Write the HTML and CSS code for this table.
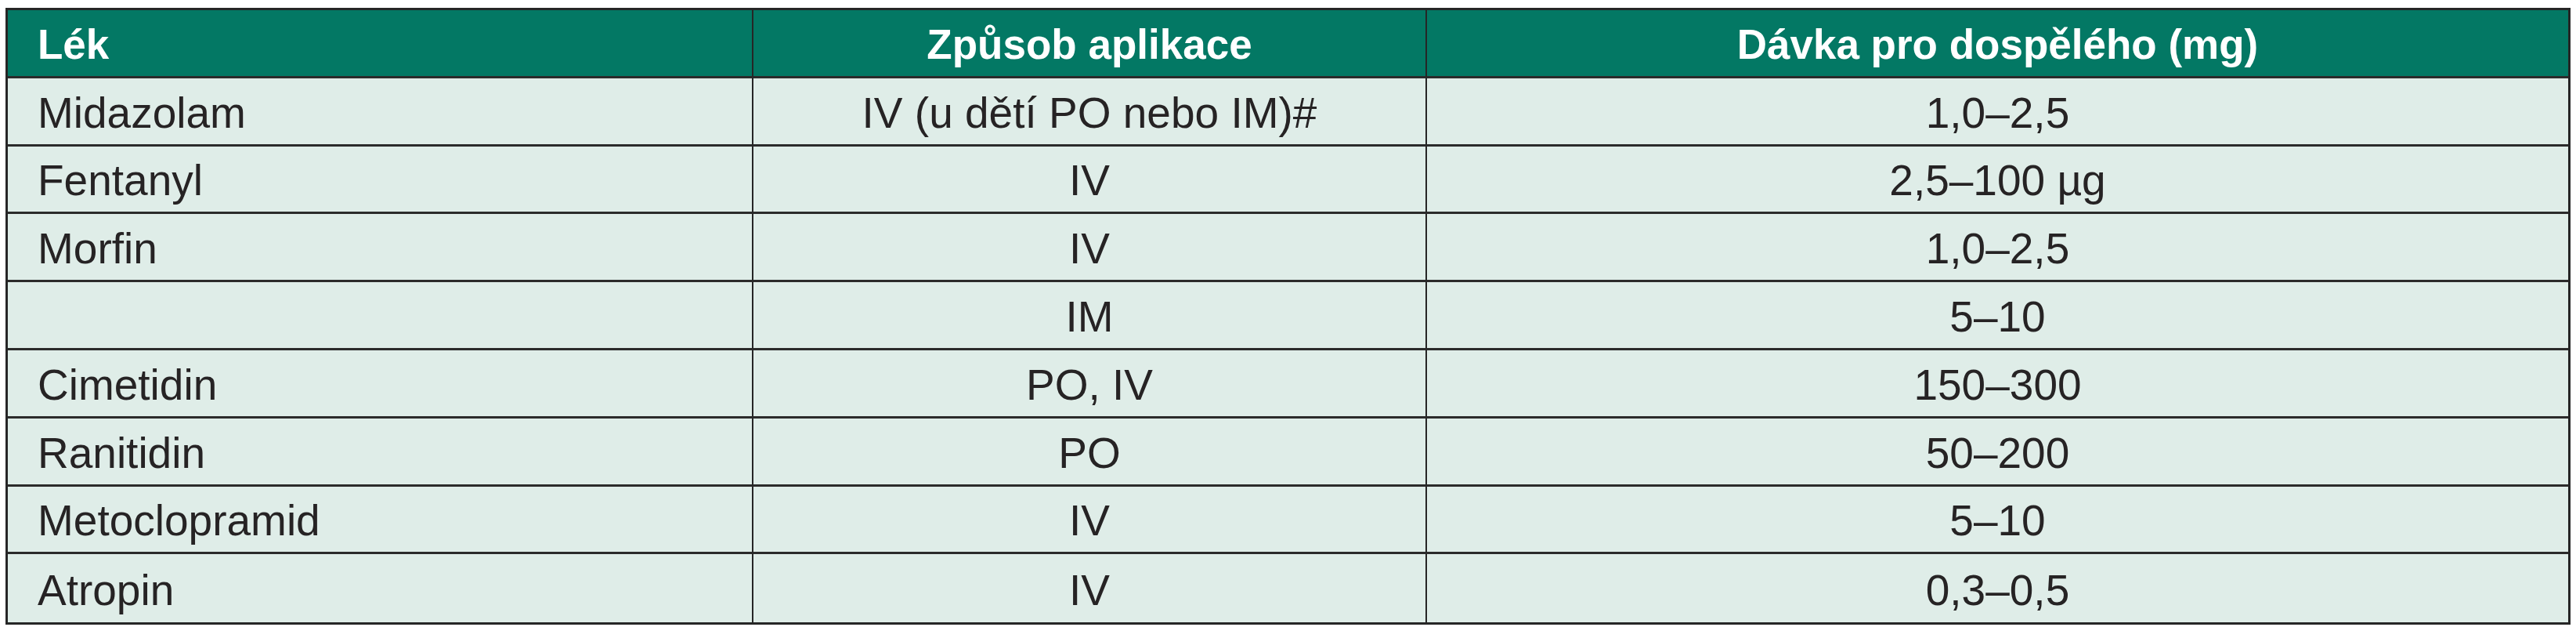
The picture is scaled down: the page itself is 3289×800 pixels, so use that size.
FILE: index.html
```html
<!DOCTYPE html>
<html lang="cs">
<head>
<meta charset="utf-8">
<title>Léky</title>
<link rel="stylesheet" href="styles.css">
</head>
<body>
<div class="tbl">
  <div class="cell head left">Lék</div>
  <div class="cell head">Způsob aplikace</div>
  <div class="cell head">Dávka pro dospělého (mg)</div>

  <div class="cell left">Midazolam</div>
  <div class="cell">IV (u dětí PO nebo IM)#</div>
  <div class="cell">1,0–2,5</div>

  <div class="cell left">Fentanyl</div>
  <div class="cell">IV</div>
  <div class="cell">2,5–100 µg</div>

  <div class="cell left">Morfin</div>
  <div class="cell">IV</div>
  <div class="cell">1,0–2,5</div>

  <div class="cell left"></div>
  <div class="cell">IM</div>
  <div class="cell">5–10</div>

  <div class="cell left">Cimetidin</div>
  <div class="cell">PO, IV</div>
  <div class="cell">150–300</div>

  <div class="cell left">Ranitidin</div>
  <div class="cell">PO</div>
  <div class="cell">50–200</div>

  <div class="cell left">Metoclopramid</div>
  <div class="cell">IV</div>
  <div class="cell">5–10</div>

  <div class="cell left last">Atropin</div>
  <div class="cell last">IV</div>
  <div class="cell last">0,3–0,5</div>
</div>
</body>
</html>
```
FILE: styles.css
```css
html, body {
  margin: 0;
  padding: 0;
  background: #ffffff;
}
body {
  padding: 10px 7px 0 7px;
  font-family: "Liberation Sans", Arial, sans-serif;
}
.tbl {
  width: 3275px;
  box-sizing: border-box;
  border: 3px solid #262626;
  display: grid;
  grid-template-columns: 952px 860px 1fr;
  grid-auto-rows: 86.8px;
  background: #dfede8;
}
.cell {
  box-sizing: border-box;
  border-bottom: 3px solid #2b2b2b;
  display: flex;
  align-items: center;
  justify-content: center;
  font-size: 55px;
  color: #262324;
  white-space: nowrap;
  padding-top: 4px;
}
.cell:nth-child(3n+1),
.cell:nth-child(3n+2) {
  border-right: 2px solid #262626;
}
.cell.left {
  justify-content: flex-start;
  padding-left: 38px;
}
.cell.last {
  border-bottom: none;
}
.cell.head {
  background: #037864;
  color: #ffffff;
  font-weight: bold;
  font-size: 53px;
}
```
